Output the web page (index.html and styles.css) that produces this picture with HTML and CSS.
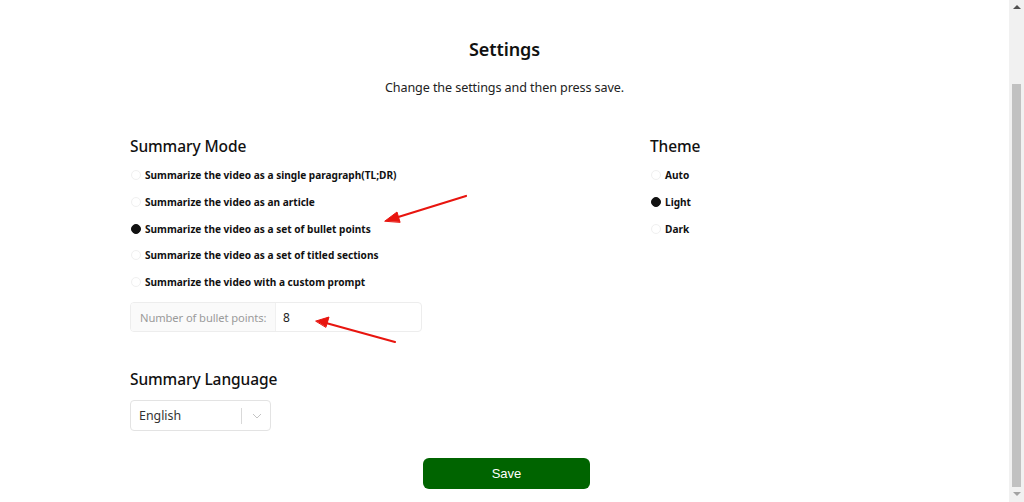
FILE: index.html
```html
<!DOCTYPE html>
<html>
<head>
<meta charset="utf-8">
<link rel="stylesheet" href="styles.css">
</head>
<body>
<div class="page">
  <header class="head">
    <h1 class="title">Settings</h1>
    <p class="subtitle">Change the settings and then press save.</p>
  </header>
  <div class="columns">
    <section class="col-left">
      <h2 class="section-title">Summary Mode</h2>
      <ul class="radios">
        <li class="radio"><span class="dot"></span>Summarize the video as a single paragraph(TL;DR)</li>
        <li class="radio"><span class="dot"></span>Summarize the video as an article</li>
        <li class="radio"><span class="dot on"></span>Summarize the video as a set of bullet points</li>
        <li class="radio"><span class="dot"></span>Summarize the video as a set of titled sections</li>
        <li class="radio"><span class="dot"></span>Summarize the video with a custom prompt</li>
      </ul>
      <div class="input-group">
        <span class="addon">Number of bullet points:</span>
        <span class="value">8</span>
      </div>
      <h2 class="section-title lang">Summary Language</h2>
      <div class="select">
        <span class="select-value">English</span>
        <span class="sep"></span>
        <svg class="chev" width="10" height="6" viewBox="0 0 10 6"><path d="M1 1l4 4 4-4" fill="none" stroke="#c4c4c4" stroke-width="1"/></svg>
      </div>
    </section>
    <section class="col-right">
      <h2 class="section-title">Theme</h2>
      <ul class="radios">
        <li class="radio"><span class="dot"></span>Auto</li>
        <li class="radio"><span class="dot on"></span>Light</li>
        <li class="radio"><span class="dot"></span>Dark</li>
      </ul>
    </section>
  </div>
  <div class="actions">
    <button class="save">Save</button>
  </div>
</div>
<div class="scrollbar">
  <span class="arrow up"></span>
  <span class="thumb"></span>
  <span class="arrow down"></span>
</div>
<svg class="annot" width="1024" height="502" viewBox="0 0 1024 502">
  <g stroke="#e8150f" stroke-width="2.2" fill="#e8150f" stroke-linecap="round">
    <line x1="466" y1="196" x2="395" y2="218"/>
    <polygon points="385,221 397,212 400,222" stroke-width="1"/>
    <line x1="395" y1="342" x2="326" y2="323"/>
    <polygon points="316,321 329,317 326,327" stroke-width="1"/>
  </g>
</svg>
</body>
</html>
```
FILE: styles.css
```css
* { box-sizing: border-box; }
html, body { margin: 0; padding: 0; background: #fff; overflow: hidden; }
body {
  font-family: "Noto Sans", "Open Sans", sans-serif;
  color: #1a1a1a;
  width: 1024px;
  height: 502px;
  position: relative;
}
.page { width: 1009px; padding-top: 35px; }
.head { text-align: center; }
.title { margin: 0; font-size: 18px; font-weight: 600; line-height: 28px; color: #111; letter-spacing: -0.1px; }
.subtitle { margin: 15px 0 0; font-size: 12.6px; line-height: 20px; color: #222; letter-spacing: -0.1px; }
.columns { display: flex; padding-left: 130px; margin-top: 36px; }
.col-left { width: 520px; }
.col-right { width: 200px; }
.section-title { margin: 0; font-size: 15.5px; font-weight: 500; line-height: 24px; color: #111; letter-spacing: -0.1px; }
.radios { list-style: none; margin: 4px 0 0; padding: 0; }
.radio {
  display: flex; align-items: center; height: 26.7px;
  font-size: 10.1px; font-weight: 700; color: #111; white-space: nowrap;
}
.dot {
  width: 10px; height: 10px; border-radius: 50%;
  border: 1px solid #f0f0f0; margin: 0 4px 0 1px; flex: none;
}
.dot.on { background: #111; border-color: #111; }
.input-group {
  display: flex; width: 292px; height: 30px; margin-top: 7px;
  border: 1px solid #ededed; border-radius: 4px; overflow: hidden;
}
.addon {
  display: flex; align-items: center; padding: 0 9px; white-space: nowrap;
  background: #fafafa; color: #9a9a9a; font-size: 11.2px; letter-spacing: -0.1px;
  border-right: 1px solid #f0f0f0; width: 145px; flex: none;
}
.value { display: flex; align-items: center; padding-left: 7px; font-size: 12px; color: #222; }
.section-title.lang { margin-top: 35px; }
.select {
  display: flex; align-items: center; width: 141px; height: 31px; margin-top: 9px;
  border: 1px solid #e3e3e3; border-radius: 4px; padding-left: 8px;
}
.select-value { font-size: 12.4px; color: #333; width: 102px; }
.sep { width: 1px; height: 16px; background: #d9d9d9; margin-right: 10px; }
.chev { display: block; }
.actions { display: flex; justify-content: center; margin-top: 27px; padding-left: 4px; }
.save {
  width: 167px; height: 31px; border: 0; border-radius: 6px;
  background: #006400; color: #fff; font-family: "Liberation Sans", Arial, sans-serif;
  font-size: 13px;
}
.scrollbar {
  position: absolute; top: 0; right: 0; width: 15px; height: 502px;
  background: #f1f1f1; display: flex; flex-direction: column; align-items: center;
}
.arrow { width: 0; height: 0; border-left: 4px solid transparent; border-right: 4px solid transparent; margin: 5px 0; }
.arrow.up { border-bottom: 4px solid #505050; }
.arrow.down { border-top: 4px solid #a3a3a3; }
.thumb { width: 9px; margin-top: 70px; height: 403px; background: #c1c1c1; flex: none; }
.annot { position: absolute; top: 0; left: 0; pointer-events: none; }
```
